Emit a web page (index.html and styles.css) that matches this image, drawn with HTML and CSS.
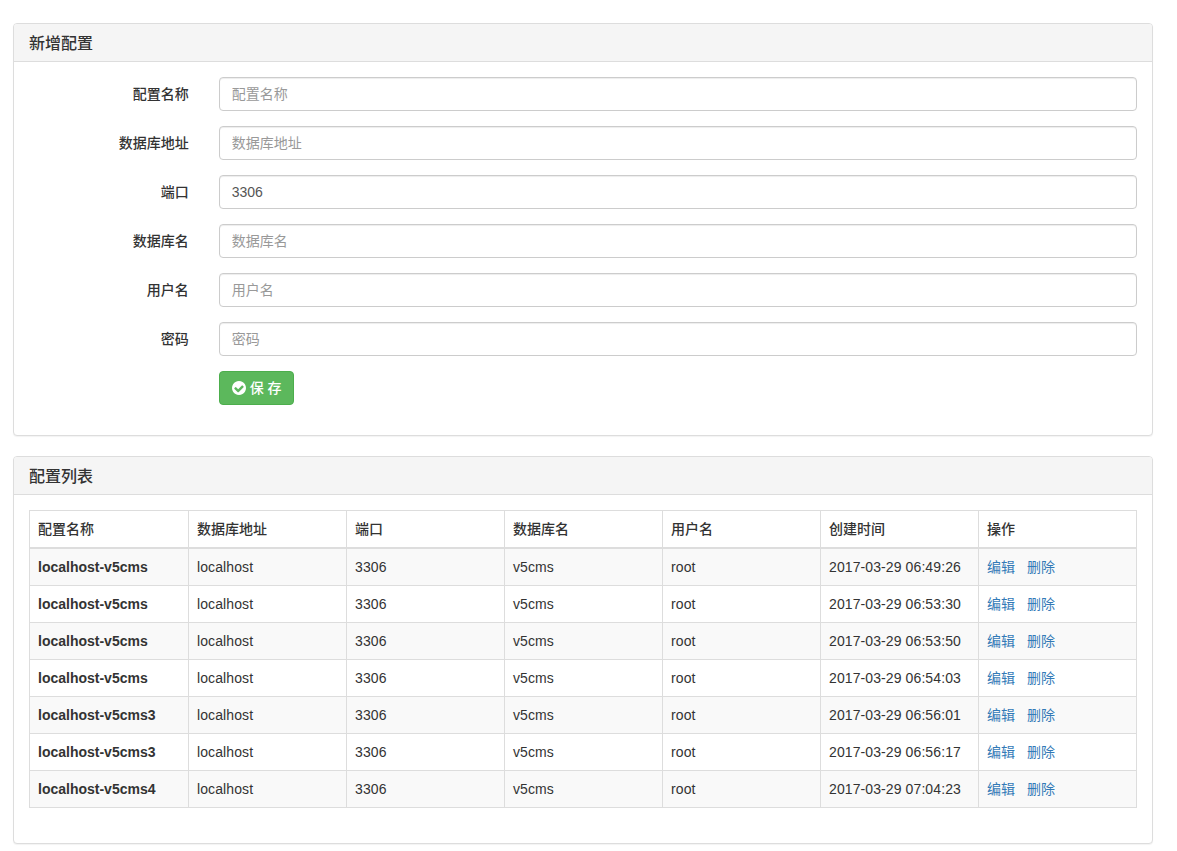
FILE: index.html
```html
<!DOCTYPE html>
<html lang="zh-CN">
<head>
<meta charset="utf-8">
<title>配置</title>
<link rel="stylesheet" href="styles.css">
</head>
<body>
<section class="panel">
  <h3 class="panel-heading">新增配置</h3>
  <form class="panel-body">
    <div class="form-group"><label class="form-label">配置名称</label><input class="form-control" placeholder="配置名称"></div>
    <div class="form-group"><label class="form-label">数据库地址</label><input class="form-control" placeholder="数据库地址"></div>
    <div class="form-group"><label class="form-label">端口</label><input class="form-control" value="3306"></div>
    <div class="form-group"><label class="form-label">数据库名</label><input class="form-control" placeholder="数据库名"></div>
    <div class="form-group"><label class="form-label">用户名</label><input class="form-control" placeholder="用户名"></div>
    <div class="form-group"><label class="form-label">密码</label><input class="form-control" placeholder="密码"></div>
    <div class="form-group">
      <span class="form-label"></span>
      <button type="button" class="btn">
        <svg class="btn-icon" viewBox="0 0 1536 1536" aria-hidden="true"><path fill="currentColor" d="M1284 638q0-28-18-46l-91-90q-19-19-45-19t-45 19l-408 407-226-226q-19-19-45-19t-45 19l-91 90q-18 18-18 46 0 27 18 45l362 362q19 19 45 19 27 0 46-19l543-543q18-18 18-45zm252 130q0 209-103 385.500t-279.500 279.500-385.500 103-385.500-103-279.500-279.500-103-385.500 103-385.500 279.500-279.500 385.500-103 385.500 103 279.500 279.500 103 385.500z"/></svg>
        <span>保 存</span>
      </button>
    </div>
  </form>
</section>
<section class="panel">
  <h3 class="panel-heading">配置列表</h3>
  <div class="panel-body">
    <table class="table">
      <thead>
        <tr><th class="first">配置名称</th><th>数据库地址</th><th>端口</th><th>数据库名</th><th>用户名</th><th>创建时间</th><th>操作</th></tr>
      </thead>
      <tbody>
        <tr><td class="name">localhost-v5cms</td><td>localhost</td><td>3306</td><td>v5cms</td><td>root</td><td>2017-03-29 06:49:26</td><td><a href="#">编辑</a><a href="#">删除</a></td></tr>
        <tr><td class="name">localhost-v5cms</td><td>localhost</td><td>3306</td><td>v5cms</td><td>root</td><td>2017-03-29 06:53:30</td><td><a href="#">编辑</a><a href="#">删除</a></td></tr>
        <tr><td class="name">localhost-v5cms</td><td>localhost</td><td>3306</td><td>v5cms</td><td>root</td><td>2017-03-29 06:53:50</td><td><a href="#">编辑</a><a href="#">删除</a></td></tr>
        <tr><td class="name">localhost-v5cms</td><td>localhost</td><td>3306</td><td>v5cms</td><td>root</td><td>2017-03-29 06:54:03</td><td><a href="#">编辑</a><a href="#">删除</a></td></tr>
        <tr><td class="name">localhost-v5cms3</td><td>localhost</td><td>3306</td><td>v5cms</td><td>root</td><td>2017-03-29 06:56:01</td><td><a href="#">编辑</a><a href="#">删除</a></td></tr>
        <tr><td class="name">localhost-v5cms3</td><td>localhost</td><td>3306</td><td>v5cms</td><td>root</td><td>2017-03-29 06:56:17</td><td><a href="#">编辑</a><a href="#">删除</a></td></tr>
        <tr><td class="name">localhost-v5cms4</td><td>localhost</td><td>3306</td><td>v5cms</td><td>root</td><td>2017-03-29 07:04:23</td><td><a href="#">编辑</a><a href="#">删除</a></td></tr>
      </tbody>
    </table>
  </div>
</section>
</body>
</html>
```
FILE: styles.css
```css
* { box-sizing: border-box; }
html, body { margin: 0; }
body {
  padding: 23px 24px 0 13px;
  font-family: "Liberation Sans", "Noto Sans CJK SC", sans-serif;
  font-size: 14px;
  line-height: 20px;
  color: #333;
  background: #fff;
}
.panel {
  margin-bottom: 20px;
  background: #fff;
  border: 1px solid #ddd;
  border-radius: 4px;
  box-shadow: 0 1px 1px rgba(0, 0, 0, .05);
}
.panel-heading {
  margin: 0;
  padding: 11px 15px 9px;
  height: 38px;
  font-size: 16px;
  font-weight: 500;
  line-height: 17.6px;
  color: #333;
  background: #f5f5f5;
  border-bottom: 1px solid #ddd;
  border-radius: 3px 3px 0 0;
}
.panel-body { display: block; padding: 15px; }
.form-group {
  display: flex;
  align-items: center;
  gap: 30px;
  margin-bottom: 15px;
}
.form-label {
  flex: 0 0 159.67px;
  text-align: right;
  font-weight: 500;
}
.form-control {
  flex: 1;
  min-width: 0;
  height: 34px;
  padding: 6px 12px;
  font: inherit;
  color: #555;
  background: #fff;
  border: 1px solid #ccc;
  border-radius: 4px;
  box-shadow: inset 0 1px 1px rgba(0, 0, 0, .075);
  outline: none;
}
.form-control::placeholder { color: #999; opacity: 1; }
.btn {
  display: inline-flex;
  align-items: center;
  gap: 4px;
  height: 34px;
  width: 75px;
  padding: 0 0 0 12px;
  font: inherit;
  font-weight: 500;
  color: #fff;
  background: #5cb85c;
  border: 1px solid #4cae4c;
  border-radius: 4px;
}
.btn-icon { width: 14px; height: 14px; flex: none; }
.table {
  width: 100%;
  margin-bottom: 20px;
  border-collapse: collapse;
  table-layout: fixed;
  border: 1px solid #ddd;
}
.table th, .table td {
  padding: 8px;
  text-align: left;
  vertical-align: top;
  border: 1px solid #ddd;
}
.table th { font-weight: 500; border-bottom-width: 2px; }
.table th.first { width: 159px; }
.table td { font-weight: 400; letter-spacing: .1px; }
.table tbody tr:nth-child(odd) { background: #f9f9f9; }
.table td.name { font-weight: 700; letter-spacing: 0; }
.table a { color: #337ab7; text-decoration: none; letter-spacing: 0; }
.table a + a { margin-left: 12px; }
```
